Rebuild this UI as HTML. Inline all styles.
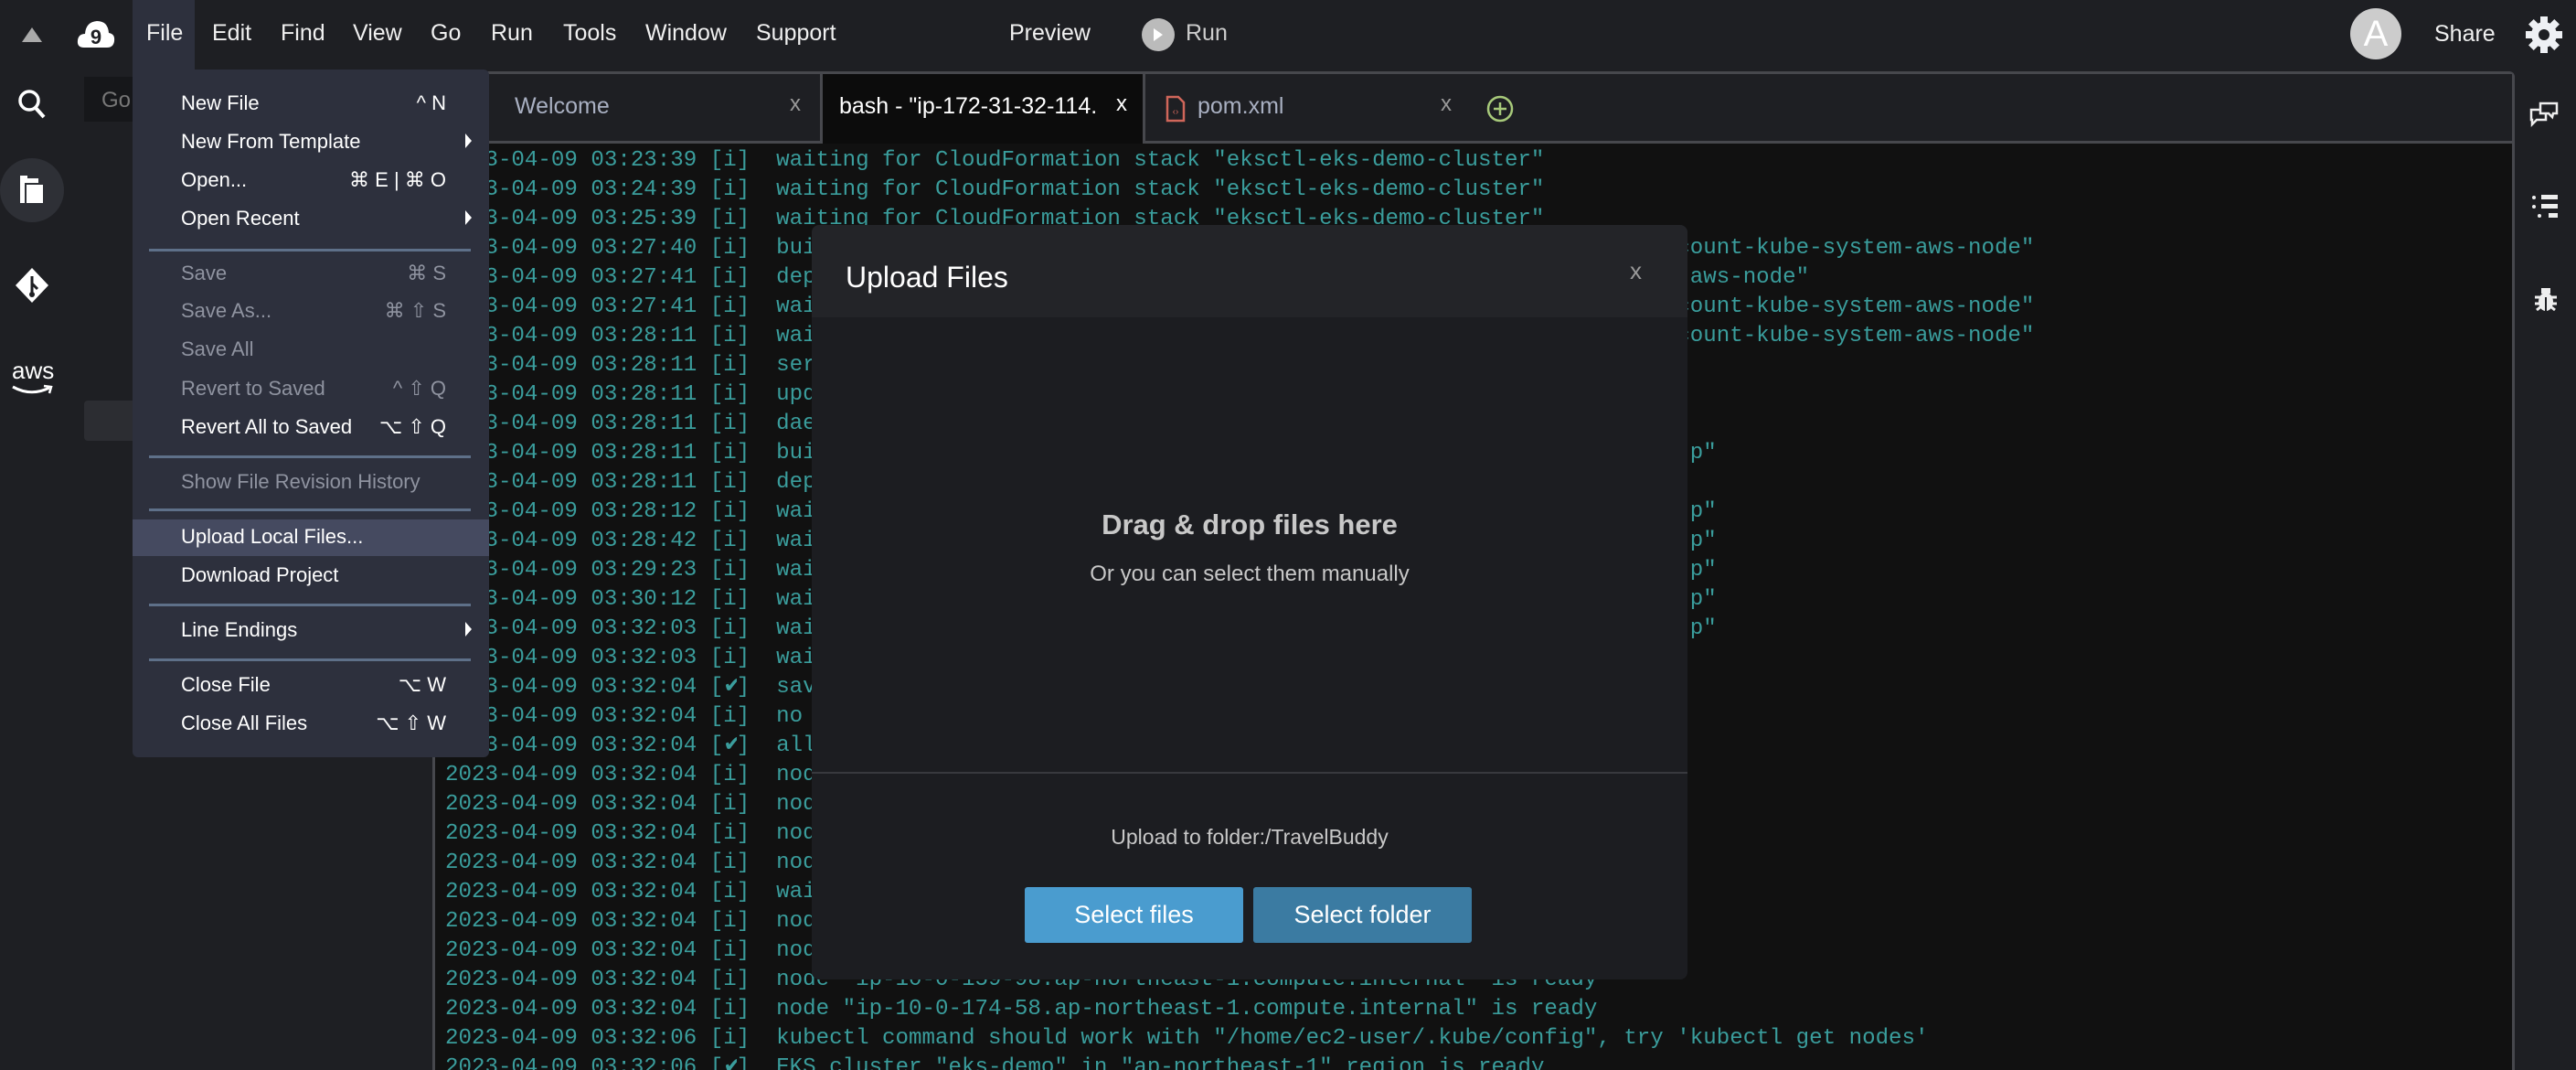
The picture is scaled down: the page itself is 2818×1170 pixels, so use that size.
<!DOCTYPE html>
<html style="width:2818px;height:1170px;overflow:hidden"><head><meta charset="utf-8"><style>
*{margin:0;padding:0;box-sizing:border-box}
body{width:2818px;height:1170px;overflow:hidden;background:#1e1f23;font-family:"Liberation Sans",sans-serif;position:relative;color:#e6e6e6}
.a{position:absolute}
.top{left:0;top:0;width:2818px;height:78px;background:#1e1f23}
.mb{top:22px;font-size:25px;color:#f0f0f0}
.panel{left:473px;top:78px;width:2278px;height:1092px;background:#111;border:3px solid #47484d;border-bottom:none;border-radius:6px 6px 0 0}
.tabs{left:476px;top:81px;width:2272px;height:76px;background:#1e1f23;border-bottom:3px solid #47484d}
.term{left:487px;top:160px;font-family:"Liberation Mono",monospace;font-size:24.15px;line-height:32px;color:#3a9d9c;white-space:pre}
.ck{display:inline-block;width:14.5px;overflow:hidden;text-align:center;vertical-align:top}
.menu{left:145px;top:76px;width:390px;height:752px;background:#2d303d;border-radius:0 6px 6px 6px}
.mi{position:absolute;left:53px;font-size:22px;color:#fff;width:330px}
.mi.d{color:#8f93a0}
.mi .k{position:absolute;right:40px;top:0}
.mi .ar{position:absolute;right:12px;top:4px;width:0;height:0;border-left:7px solid #fff;border-top:8px solid transparent;border-bottom:8px solid transparent}
.sep{position:absolute;left:18px;width:352px;height:3px;background:#5e7089}
.modal{left:888px;top:246px;width:958px;height:825px;background:#1c1d21;border-radius:8px;overflow:hidden}
.btn{position:absolute;top:724px;width:239px;height:61px;color:#fff;font-size:27px;text-align:center;line-height:61px;border-radius:3px}
</style></head><body>
<div class="a top"></div>
<div class="a" style="left:0;top:78px;width:72px;height:1092px;background:#1e1f23"></div>
<div class="a" style="left:72px;top:78px;width:401px;height:1092px;background:#1e1f23"></div>
<div class="a" style="left:92px;top:84px;width:80px;height:49px;background:#16171a"></div>
<div class="a" style="left:111px;top:96px;font-size:24px;color:#777">Go</div>
<div class="a" style="left:92px;top:438px;width:60px;height:44px;background:#2c2d32;border-radius:4px"></div>
<svg class="a" style="left:20px;top:26px" width="30" height="24"><polygon points="15,4 26,20 4,20" fill="#aaa"/></svg>
<svg class="a" style="left:84px;top:18px" width="42" height="40" viewBox="0 0 42 40"><path d="M8 34 Q0 34 1 26 Q2 19 9 19 Q10 6 22 5 Q34 5 35 18 Q42 19 41 27 Q40 34 33 34Z" fill="#fff"/><text x="21" y="30" font-size="22" font-weight="bold" text-anchor="middle" fill="#1e1f23" font-family="Liberation Sans">9</text></svg>
<svg class="a" style="left:18px;top:96px" width="34" height="36"><circle cx="14" cy="14" r="10" stroke="#fff" stroke-width="3.5" fill="none"/><line x1="21" y1="22" x2="30" y2="32" stroke="#fff" stroke-width="4"/></svg>
<div class="a" style="left:0;top:173px;width:70px;height:70px;border-radius:50%;background:#2e3036"></div>
<svg class="a" style="left:21px;top:192px" width="28" height="32"><rect x="1" y="3" width="20" height="27" fill="#fff"/><rect x="7" y="9" width="20" height="22" fill="#fff" stroke="#2e3036" stroke-width="2"/><rect x="1" y="0" width="8" height="4" fill="#fff"/></svg>
<svg class="a" style="left:16px;top:292px" width="38" height="40"><polygon points="19,1 37,20 19,39 1,20" fill="#fff"/><line x1="19" y1="10" x2="19" y2="30" stroke="#1e1f23" stroke-width="3"/><circle cx="19" cy="30" r="3" fill="#1e1f23"/><line x1="19" y1="18" x2="25" y2="24" stroke="#1e1f23" stroke-width="3"/></svg>
<div class="a" style="left:13px;top:390px;font-size:26px;color:#fff">aws</div>
<svg class="a" style="left:12px;top:420px" width="48" height="14"><path d="M2 3 Q22 14 42 4" stroke="#fff" stroke-width="3" fill="none"/><path d="M36 2 L44 3 L42 10" stroke="#fff" stroke-width="2.5" fill="none"/></svg>
<div class="a" style="left:145px;top:0;width:68px;height:78px;background:#2d303d"></div>
<div class="a mb" style="left:160px">File</div>
<div class="a mb" style="left:232px">Edit</div>
<div class="a mb" style="left:307px">Find</div>
<div class="a mb" style="left:386px">View</div>
<div class="a mb" style="left:471px">Go</div>
<div class="a mb" style="left:537px">Run</div>
<div class="a mb" style="left:616px">Tools</div>
<div class="a mb" style="left:706px">Window</div>
<div class="a mb" style="left:827px">Support</div>
<div class="a mb" style="left:1104px">Preview</div>
<div class="a" style="left:1249px;top:20px;width:36px;height:36px;border-radius:50%;background:#bbb"></div>
<svg class="a" style="left:1261px;top:30px" width="12" height="16"><polygon points="1,1 11,8 1,15" fill="#fff"/></svg>
<div class="a mb" style="left:1297px;color:#ccc">Run</div>
<div class="a" style="left:2571px;top:9px;width:56px;height:56px;border-radius:50%;background:#ccc;color:#fff;font-size:40px;text-align:center;line-height:56px">A</div>
<div class="a mb" style="left:2663px;top:23px">Share</div>
<svg class="a" style="left:2762px;top:17px" width="42" height="42" viewBox="0 0 42 42"><g fill="#eef0f4"><circle cx="21" cy="21" r="14"/><g><rect x="17" y="1" width="8" height="9"/><rect x="17" y="32" width="8" height="9"/><rect x="1" y="17" width="9" height="8"/><rect x="32" y="17" width="9" height="8"/></g><g transform="rotate(45 21 21)"><rect x="17" y="1" width="8" height="9"/><rect x="17" y="32" width="8" height="9"/><rect x="1" y="17" width="9" height="8"/><rect x="32" y="17" width="9" height="8"/></g></g><circle cx="21" cy="21" r="6" fill="#1e1f23"/></svg>
<svg class="a" style="left:2767px;top:110px" width="32" height="30"><path d="M2 10 h16 v11 h-10 l-5 5 v-5 h-1z" stroke="#eee" stroke-width="2.5" fill="none"/><path d="M12 3 h18 v11 h-4 l-1 4 -4 -4 h-9z" stroke="#eee" stroke-width="2.5" fill="#1e1f23"/></svg>
<svg class="a" style="left:2769px;top:212px" width="32" height="30"><circle cx="3" cy="4" r="2" fill="#eee"/><circle cx="3" cy="14" r="2" fill="#eee"/><circle cx="9" cy="24" r="2" fill="#eee"/><rect x="11" y="1" width="18" height="5" fill="#eee"/><rect x="11" y="11" width="18" height="5" fill="#eee"/><rect x="19" y="21" width="10" height="5" fill="#eee"/></svg>
<svg class="a" style="left:2772px;top:313px" width="26" height="28"><ellipse cx="13" cy="17" rx="8" ry="10" fill="#eee"/><rect x="8" y="2" width="10" height="6" fill="#eee"/><path d="M1 12h24M1 19h24M3 26l5-4M23 26l-5-4" stroke="#eee" stroke-width="3"/><line x1="13" y1="12" x2="13" y2="27" stroke="#1e1f23" stroke-width="2"/></svg>
<div class="a panel"></div>
<div class="a tabs"></div>
<div class="a" style="left:897px;top:81px;width:356px;height:76px;background:#0c0c0c;border-left:3px solid #47484d;border-right:3px solid #47484d"></div>
<div class="a" style="left:563px;top:102px;font-size:25px;color:#a9b0c2">Welcome</div>
<div class="a" style="left:864px;top:100px;font-size:24px;color:#999">x</div>
<div class="a" style="left:918px;top:102px;font-size:25px;color:#fff;width:300px;overflow:hidden;white-space:nowrap">bash - "ip-172-31-32-114.</div>
<div class="a" style="left:1221px;top:100px;font-size:24px;color:#fff">x</div>
<svg class="a" style="left:1275px;top:104px" width="22" height="30"><path d="M2 2 h12 l6 6 v20 h-18z" stroke="#d0665a" stroke-width="2.5" fill="none"/><text x="11" y="21" font-size="10" text-anchor="middle" fill="#d0665a" font-family="Liberation Sans">‹›</text></svg>
<div class="a" style="left:1310px;top:102px;font-size:25px;color:#a9b0c2">pom.xml</div>
<div class="a" style="left:1576px;top:100px;font-size:24px;color:#999">x</div>
<svg class="a" style="left:1625px;top:103px" width="32" height="32"><circle cx="16" cy="16" r="13" stroke="#a7c97a" stroke-width="2.5" fill="none"/><path d="M16 9v14M9 16h14" stroke="#a7c97a" stroke-width="2.5"/></svg>
<div class="a term">2023-04-09 03:23:39 [i]  waiting for CloudFormation stack "eksctl-eks-demo-cluster"
2023-04-09 03:24:39 [i]  waiting for CloudFormation stack "eksctl-eks-demo-cluster"
2023-04-09 03:25:39 [i]  waiting for CloudFormation stack "eksctl-eks-demo-cluster"
2023-04-09 03:27:40 [i]  building iamserviceaccount stack "eksctl-eks-demo-addon-iamserviceaccount-kube-system-aws-node"
2023-04-09 03:27:41 [i]  deploying stack "eksctl-eks-demo-addon-iamserviceaccount-kube-system-aws-node"
2023-04-09 03:27:41 [i]  waiting for CloudFormation stack "eksctl-eks-demo-addon-iamserviceaccount-kube-system-aws-node"
2023-04-09 03:28:11 [i]  waiting for CloudFormation stack "eksctl-eks-demo-addon-iamserviceaccount-kube-system-aws-node"
2023-04-09 03:28:11 [i]  serviceaccount "kube-system/aws-node" already exists
2023-04-09 03:28:11 [i]  updated serviceaccount "kube-system/aws-node"
2023-04-09 03:28:11 [i]  daemonset "kube-system/aws-node" restarted
2023-04-09 03:28:11 [i]  building managed nodegroup stack "eksctl-eks-demo-nodegroup-node-grp-p"
2023-04-09 03:28:11 [i]  deploying stack "eksctl-eks-demo-nodegroup"
2023-04-09 03:28:12 [i]  waiting for CloudFormation stack "eksctl-eks-demo-nodegroup-node-grp-p"
2023-04-09 03:28:42 [i]  waiting for CloudFormation stack "eksctl-eks-demo-nodegroup-node-grp-p"
2023-04-09 03:29:23 [i]  waiting for CloudFormation stack "eksctl-eks-demo-nodegroup-node-grp-p"
2023-04-09 03:30:12 [i]  waiting for CloudFormation stack "eksctl-eks-demo-nodegroup-node-grp-p"
2023-04-09 03:32:03 [i]  waiting for CloudFormation stack "eksctl-eks-demo-nodegroup-node-grp-p"
2023-04-09 03:32:03 [i]  waiting for the control plane to become ready
2023-04-09 03:32:04 [<span class="ck">✔</span>]  saved kubeconfig as "/home/ec2-user/.kube/config"
2023-04-09 03:32:04 [i]  no tasks
2023-04-09 03:32:04 [<span class="ck">✔</span>]  all EKS cluster resources for "eks-demo" have been created
2023-04-09 03:32:04 [i]  nodegroup "node-group" has 3 node(s)
2023-04-09 03:32:04 [i]  node "ip-10-0-1-1.ap-northeast-1.compute.internal" is ready
2023-04-09 03:32:04 [i]  node "ip-10-0-1-2.ap-northeast-1.compute.internal" is ready
2023-04-09 03:32:04 [i]  node "ip-10-0-1-3.ap-northeast-1.compute.internal" is ready
2023-04-09 03:32:04 [i]  waiting for at least 3 node(s) to become ready
2023-04-09 03:32:04 [i]  nodegroup "node-group" has 3 node(s)
2023-04-09 03:32:04 [i]  node "ip-10-0-1-1.ap-northeast-1.compute.internal" is ready
2023-04-09 03:32:04 [i]  node "ip-10-0-159-98.ap-northeast-1.compute.internal" is ready
2023-04-09 03:32:04 [i]  node "ip-10-0-174-58.ap-northeast-1.compute.internal" is ready
2023-04-09 03:32:06 [i]  kubectl command should work with "/home/ec2-user/.kube/config", try 'kubectl get nodes'
2023-04-09 03:32:06 [<span class="ck">✔</span>]  EKS cluster "eks-demo" in "ap-northeast-1" region is ready</div>
<div class="a menu">
<div class="mi" style="top:24px">New File<span class="k">^ N</span></div>
<div class="mi" style="top:66px">New From Template<span class="ar"></span></div>
<div class="mi" style="top:108px">Open...<span class="k">⌘ E | ⌘ O</span></div>
<div class="mi" style="top:150px">Open Recent<span class="ar"></span></div>
<div class="sep" style="top:196px"></div>
<div class="mi d" style="top:210px">Save<span class="k">⌘ S</span></div>
<div class="mi d" style="top:251px">Save As...<span class="k">⌘ ⇧ S</span></div>
<div class="mi d" style="top:293px">Save All</div>
<div class="mi d" style="top:336px">Revert to Saved<span class="k">^ ⇧ Q</span></div>
<div class="mi" style="top:378px">Revert All to Saved<span class="k">⌥ ⇧ Q</span></div>
<div class="sep" style="top:422px"></div>
<div class="mi d" style="top:438px">Show File Revision History</div>
<div class="sep" style="top:480px"></div>
<div class="a" style="left:0;top:492px;width:390px;height:40px;background:#454a60"></div>
<div class="mi" style="top:498px">Upload Local Files...</div>
<div class="mi" style="top:540px">Download Project</div>
<div class="sep" style="top:584px"></div>
<div class="mi" style="top:600px">Line Endings<span class="ar"></span></div>
<div class="sep" style="top:644px"></div>
<div class="mi" style="top:660px">Close File<span class="k">⌥ W</span></div>
<div class="mi" style="top:702px">Close All Files<span class="k">⌥ ⇧ W</span></div>
</div>
<div class="a modal">
<div class="a" style="left:0;top:0;width:958px;height:101px;background:#232428"></div>
<div class="a" style="left:37px;top:39px;font-size:32px;color:#fff">Upload Files</div>
<div class="a" style="left:895px;top:35px;font-size:26px;color:#999">x</div>
<div class="a" style="left:0;top:310px;width:958px;text-align:center;font-size:31px;font-weight:bold;color:#c8c8c8">Drag &amp; drop files here</div>
<div class="a" style="left:0;top:368px;width:958px;text-align:center;font-size:24px;color:#c8c8c8">Or you can select them manually</div>
<div class="a" style="left:0;top:598px;width:958px;height:2px;background:#38393e"></div>
<div class="a" style="left:0;top:656px;width:958px;text-align:center;font-size:23px;color:#c8c8c8">Upload to folder:/TravelBuddy</div>
<div class="btn" style="left:233px;background:#4a9ccf">Select files</div>
<div class="btn" style="left:483px;background:#3b7ba2">Select folder</div>
</div>
</body></html>
